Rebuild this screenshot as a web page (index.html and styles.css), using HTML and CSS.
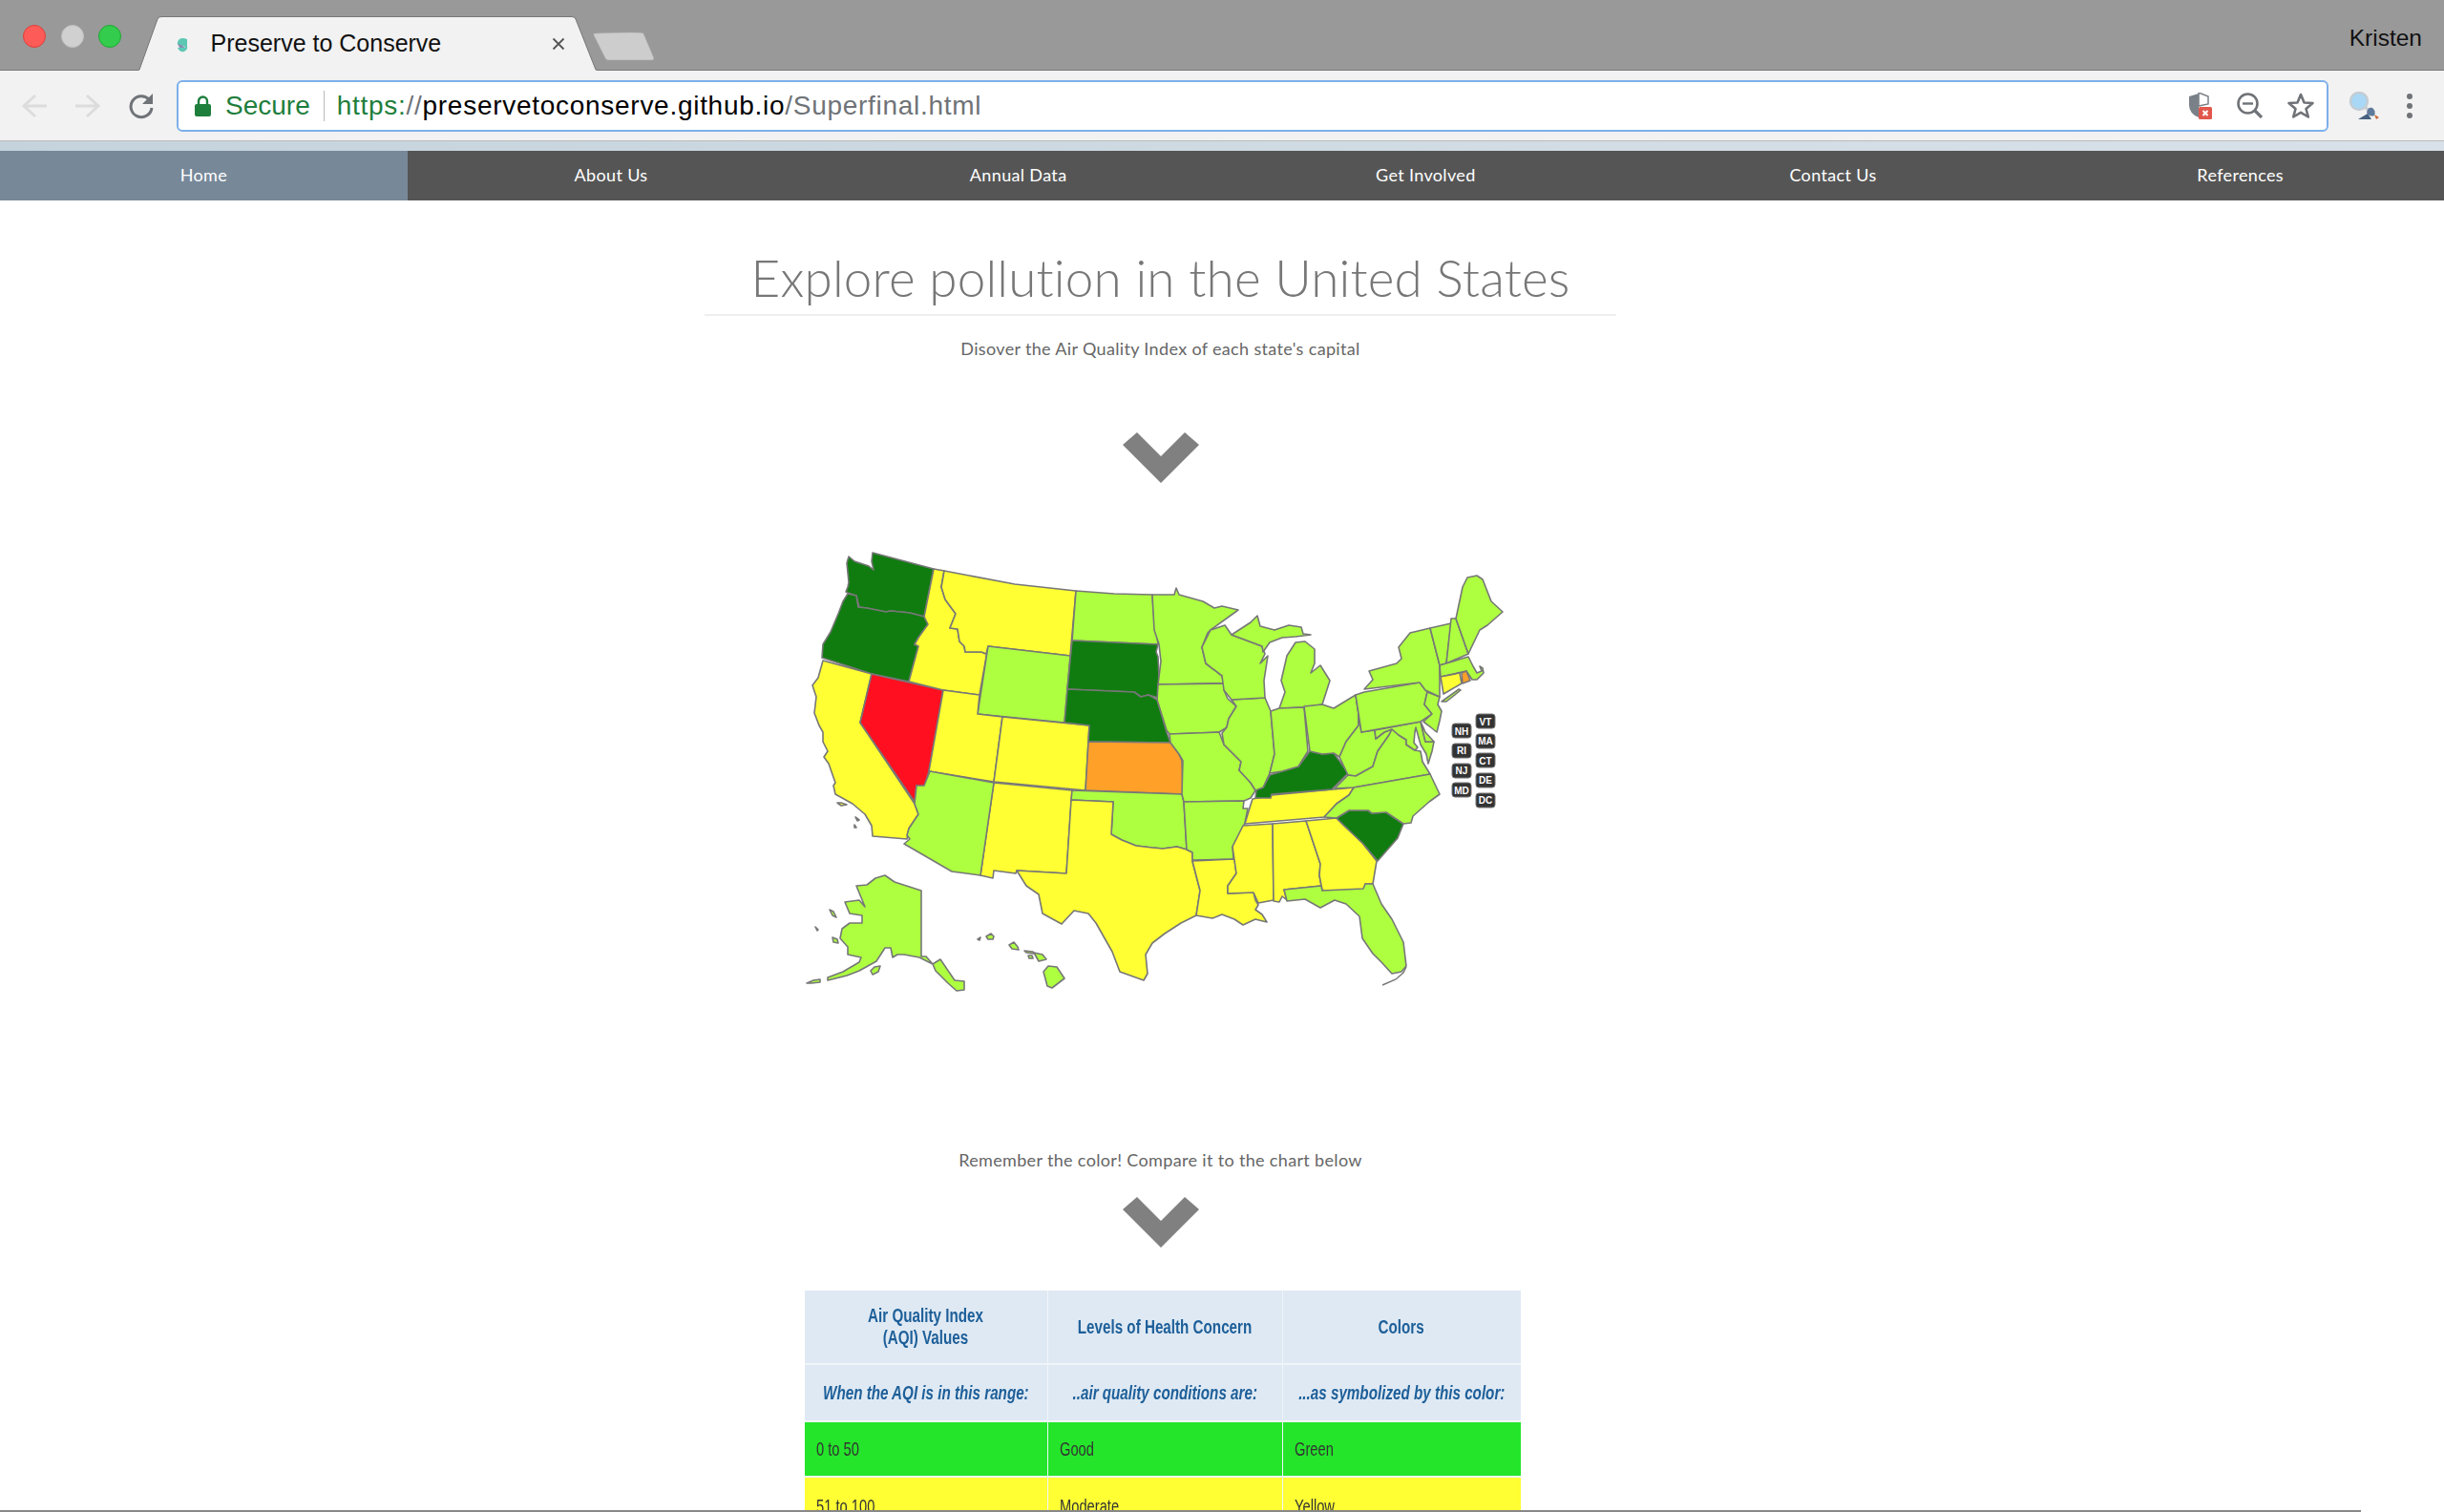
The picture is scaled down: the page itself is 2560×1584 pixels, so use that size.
FILE: index.html
```html
<!DOCTYPE html>
<html lang="en">
<head>
<meta charset="utf-8">
<title>Preserve to Conserve</title>
<link rel="stylesheet" href="styles.css">
</head>
<body>
<header class="tabstrip">
  <div class="lights"><span class="light red"></span><span class="light grey"></span><span class="light green"></span></div>
  <div class="tab">
    <svg class="tab-shape" width="483" height="57" viewBox="0 0 483 57"><path d="M0 57 L2 56 L21 3 Q22 .5 25 .5 H455 Q458 .5 459 3 L480 56 L483 57" fill="#f2f2f2" stroke="#777" stroke-width="1"/></svg>
    <svg class="favicon" width="12" height="16" viewBox="0 0 12 16"><path d="M11 2 Q3 -1 1 5 Q0 9 5 9 Q9 9 9 11 L1 11 Q3 16 8 15 Q12 13 11 10" fill="#5cc8b4"/><path d="M1 5 Q1 8 5 8 L9 11 L3 11 Q1 8 1 5Z" fill="#8a8fb0"/></svg>
    <span class="tab-title">Preserve to Conserve</span>
    <svg class="tab-close" width="14" height="14" viewBox="0 0 14 14"><path d="M1.500 1.500 L12.500 12.500 M12.500 1.500 L1.500 12.500" stroke="#555" stroke-width="1.800"/></svg>
  </div>
  <svg class="newtab" width="64" height="31" viewBox="0 0 64 31"><path d="M2 2 Q52 0 53 2 L64 28 Q64 30 62 30 H16 Q14 30 13 28 L1 4 Q0 2 2 2Z" fill="#cdcdcd" stroke="#aaa" stroke-width=".6"/></svg>
  <span class="user">Kristen</span>
</header>

<div class="toolbar">
  <svg class="tool" width="28" height="26" viewBox="0 0 28 26"><path d="M15 2 L3 13 L15 24 M3 13 H27" fill="none" stroke="#dcdcdc" stroke-width="3"/></svg>
  <svg class="tool" width="28" height="26" viewBox="0 0 28 26"><path d="M13 2 L25 13 L13 24 M25 13 H1" fill="none" stroke="#dcdcdc" stroke-width="3"/></svg>
  <svg class="tool" width="28" height="28" viewBox="0 0 28 28"><path d="M22 7 A11 11 0 1 0 25 16" fill="none" stroke="#6f7377" stroke-width="3"/><path d="M26 1 V12 H15Z" fill="#6f7377"/></svg>
  <div class="address">
    <svg class="lock" width="17" height="22" viewBox="0 0 17 22"><path d="M4 9 V6 A4.500 4.500 0 0 1 13 6 V9" fill="none" stroke="#1e7e3c" stroke-width="2.400"/><rect x="0" y="9" width="17" height="13" rx="2" fill="#1e7e3c"/></svg>
    <span class="secure">Secure</span>
    <span class="sep"></span>
    <span class="url"><span class="secure">https:</span><span class="dim">//</span>preservetoconserve.github.io<span class="dim">/Superfinal.html</span></span>
    <div class="addr-icons">
      <svg width="26" height="28" viewBox="0 0 26 28"><path d="M12 0 L22 4 V12 L12 14Z" fill="#fff" stroke="#7a8087" stroke-width="1.500"/><path d="M2 4 L12 1 V26 Q2 22 2 13Z" fill="#7a8087"/><rect x="12" y="15" width="14" height="13" rx="1.500" fill="#e2574c"/><path d="M16.500 19 L21.500 24 M21.500 19 L16.500 24" stroke="#fff" stroke-width="2"/></svg>
      <svg width="27" height="27" viewBox="0 0 27 27"><circle cx="11.500" cy="11.500" r="10" fill="none" stroke="#6f7377" stroke-width="2.600"/><path d="M18.500 18.500 L26 26" stroke="#6f7377" stroke-width="3.200"/><path d="M6 11.500 H17" stroke="#6f7377" stroke-width="2.400"/></svg>
      <svg width="28" height="27" viewBox="0 0 28 27"><path d="M14 2 L17.500 10.500 L26.500 11 L19.500 17 L21.800 25.500 L14 20.800 L6.200 25.500 L8.500 17 L1.500 11 L10.500 10.500Z" fill="none" stroke="#6f7377" stroke-width="2.600" stroke-linejoin="round"/></svg>
    </div>
  </div>
  <svg class="ext" width="32" height="29" viewBox="0 0 32 29"><circle cx="11" cy="10" r="9" fill="#a8d8f5" stroke="#c4ccd2" stroke-width="2.400"/><path d="M17 16 L23 21" stroke="#c8ccd0" stroke-width="3"/><path d="M19 22 Q20 16 25 17 Q29 20 27 25 Q22 27 19 22Z" fill="#5f7a9a"/><path d="M10 29 L20 23 L24 29Z" fill="#46617f"/><path d="M27 24 L32 27 L29 29Z" fill="#c8673a"/></svg>
  <svg class="dots" width="10" height="26" viewBox="0 0 10 26"><circle cx="5" cy="3" r="3" fill="#6f7377"/><circle cx="5" cy="13" r="3" fill="#6f7377"/><circle cx="5" cy="23" r="3" fill="#6f7377"/></svg>
</div>
<div class="strip"></div>

<nav class="nav">
  <a class="nav-item active">Home</a>
  <a class="nav-item">About Us</a>
  <a class="nav-item">Annual Data</a>
  <a class="nav-item">Get Involved</a>
  <a class="nav-item">Contact Us</a>
  <a class="nav-item">References</a>
</nav>

<main class="content">
  <h1 class="title">Explore pollution in the United States</h1>
  <p class="lead first">Disover the Air Quality Index of each state's capital</p>
  <svg class="chevron one" width="80" height="54" viewBox="0 0 80 54"><path d="M0 13 L15 0 L40 25 L65 0 L80 13 L40 53Z" fill="#808080"/></svg>

  <svg class="map" width="751" height="480" viewBox="840 570 751 480">
    <g class="states">
      <polygon class="d" points="914,579 978,596 968,646 953,642 933,640 928,641 918,639 908,637 900,636 898,628 897,624 888,621 886,620 888,615 889,610 888,600 887,590 889,583 895,588 910,593 915,597 913,588"/>
      <polygon class="d" points="888,622 897,624 899,636 908,637 918,639 928,641 933,640 953,642 968,646 972,654 962,668 958,675 962,677 952,714 913,706 861,689 862,675 870,662 878,643 883,630"/>
      <polygon class="y" points="862,692 913,706 901,757 958,842 962,853 952,868 950,879 914,876 913,865 906,853 893,842 875,832 873,823 875,820 868,800 863,793 867,787 862,777 862,767 858,760 853,747 855,730 851,718 857,710"/>
      <polygon class="r" points="913,706 988,723 973,808 968,825 960,823 958,840 901,757"/>
      <polygon class="y" points="978,596 989,598 986,615 990,628 1001,643 995,658 1003,659 1005,672 1010,677 1011,683 1028,683 1033,685 1035,677 1026,728 988,723 952,714 962,677 958,675 962,668 972,654 968,646"/>
      <polygon class="y" points="989,598 1063,612 1127,619 1121,687 1035,677 1033,685 1028,683 1011,683 1010,677 1005,672 1003,659 995,658 1001,643 990,628 986,615"/>
      <polygon class="g" points="1035,677 1121,687 1115,757 1024,748"/>
      <polygon class="y" points="988,723 1026,728 1024,748 1050,751 1041,819 973,808"/>
      <polygon class="y" points="1050,751 1141,760 1140,777 1137,828 1041,819"/>
      <polygon class="g" points="1127,619 1167,622 1207,623 1208,640 1213,675 1123,671"/>
      <polygon class="d" points="1123,671 1213,675 1211,683 1213,688 1215,732 1210,730 1203,728 1195,730 1188,725 1118,722"/>
      <polygon class="d" points="1118,722 1188,725 1195,730 1203,728 1212,733 1222,767 1226,778 1140,777 1141,760 1115,757"/>
      <polygon class="o" points="1140,777 1226,778 1235,790 1238,797 1239,832 1137,828"/>
      <polygon class="y" points="1041,820 1123,828 1117,915 1065,912 1064,915 1041,912 1040,920 1027,917"/>
      <polygon class="g" points="974,808 1041,820 1027,917 997,913 947,884 953,879 950,875 952,868 962,853 958,842 960,823 968,823"/>
      <polygon class="g" points="1123,828 1238,832 1240,840 1243,890 1233,887 1218,889 1207,888 1190,886 1175,880 1164,874 1166,840 1122,838"/>
      <polygon class="y" points="1122,838 1166,840 1164,874 1175,880 1190,886 1207,888 1218,889 1233,887 1243,890 1249,893 1249,902 1257,933 1253,959 1237,967 1220,978 1207,988 1200,1000 1202,1020 1198,1027 1173,1018 1165,997 1148,967 1140,957 1125,954 1112,968 1092,957 1088,937 1075,928 1065,912 1117,915"/>
      <polygon class="g" points="1207,623 1230,623 1232,616 1235,623 1260,630 1272,637 1280,635 1297,639 1268,660 1265,663 1259,678 1263,695 1280,708 1282,716 1213,717 1216,693 1214,675 1209,660"/>
      <polygon class="g" points="1213,717 1282,716 1282,723 1286,732 1295,740 1287,753 1285,762 1277,767 1225,769 1222,765 1212,733"/>
      <polygon class="g" points="1225,769 1277,767 1282,780 1300,798 1298,807 1310,820 1315,828 1310,836 1303,839 1240,840 1238,832 1239,797 1235,790 1226,778"/>
      <polygon class="g" points="1240,840 1303,839 1302,847 1307,847 1304,862 1300,870 1291,887 1292,900 1249,901 1249,893 1243,890"/>
      <polygon class="y" points="1249,902 1293,900 1295,915 1286,928 1286,936 1313,935 1315,943 1318,948 1315,953 1322,958 1327,966 1315,963 1302,969 1293,963 1280,958 1270,962 1253,959 1257,933"/>
      <polygon class="y" points="1302,865 1333,863 1334,943 1318,946 1313,935 1286,936 1286,928 1295,915 1291,887"/>
      <polygon class="y" points="1333,863 1368,860 1383,905 1382,917 1384,928 1345,932 1348,943 1343,939 1340,945 1334,944"/>
      <polygon class="y" points="1368,860 1400,857 1408,865 1427,883 1442,902 1438,926 1430,926 1430,934 1385,933 1382,917 1383,905"/>
      <polygon class="d" points="1400,857 1413,849 1433,849 1437,852 1452,851 1470,863 1464,878 1443,902 1427,883 1408,865"/>
      <polygon class="g" points="1345,932 1384,928 1385,933 1428,931 1430,926 1438,926 1447,947 1458,963 1470,987 1473,1012 1468,1018 1458,1020 1447,1008 1438,999 1427,983 1424,960 1410,947 1398,943 1383,951 1367,942 1348,944"/>
      <polygon class="y" points="1312,837 1332,833 1418,825 1413,833 1400,842 1387,856 1304,863 1310,843"/>
      <polygon class="d" points="1315,836 1316,827 1323,825 1330,812 1343,808 1360,803 1372,787 1385,790 1397,789 1403,797 1412,810 1395,827 1332,832 1331,836"/>
      <polygon class="g" points="1290,733 1325,731 1331,745 1335,790 1330,810 1323,825 1315,828 1310,820 1298,807 1300,798 1282,780 1280,768 1285,762 1287,753 1295,740"/>
      <polygon class="g" points="1268,660 1283,655 1290,665 1322,677 1325,685 1320,695 1328,687 1324,713 1325,731 1290,733 1282,723 1280,708 1263,695 1259,678"/>
      <polygon class="g" points="1290,665 1310,652 1317,645 1320,656 1335,660 1350,655 1363,657 1365,664 1373,665 1357,667 1343,668 1330,673 1323,683 1322,677"/>
      <polygon class="g" points="1340,742 1346,725 1342,713 1348,687 1357,673 1367,672 1377,680 1377,695 1373,705 1383,697 1393,713 1385,738 1366,741"/>
      <polygon class="g" points="1331,745 1340,742 1366,741 1370,787 1360,803 1343,808 1330,810 1335,790"/>
      <polygon class="g" points="1366,740 1385,738 1397,742 1420,728 1423,748 1423,760 1410,777 1403,793 1397,789 1385,790 1372,787"/>
      <polygon class="g" points="1420,728 1423,748 1423,760 1410,777 1403,793 1412,812 1420,813 1438,803 1443,787 1455,770 1458,764 1450,767 1441,774 1440,765 1426,767"/>
      <polygon class="g" points="1398,826 1412,812 1420,813 1438,803 1443,787 1455,770 1458,764 1465,770 1473,775 1473,780 1482,786 1488,787 1490,798 1498,811 1418,825"/>
      <polygon class="g" points="1418,825 1498,811 1508,832 1497,840 1480,855 1478,862 1470,863 1452,851 1437,852 1433,849 1413,849 1400,857 1387,856 1400,842 1413,833"/>
      <polygon class="g" points="1440,765 1488,756 1493,777 1502,777 1500,787 1496,800 1494,790 1488,780 1483,762 1482,767 1481,778 1485,783 1482,786 1473,780 1473,775 1465,770 1458,764 1450,767 1441,774"/>
      <polygon class="g" points="1488,756 1493,767 1502,777 1493,777"/>
      <polygon class="g" points="1420,728 1429,725 1487,715 1495,725 1492,738 1500,748 1488,756 1426,767"/>
      <polygon class="g" points="1495,725 1508,730 1506,738 1510,745 1508,755 1505,767 1500,763 1491,756 1500,748 1492,738"/>
      <polygon class="g" points="1429,722 1438,712 1434,703 1463,695 1468,690 1465,678 1477,663 1498,658 1508,697 1508,730 1493,723 1487,715"/>
      <polygon class="g" points="1510,735 1528,722 1530,723 1515,735"/>
      <polygon class="g" points="1498,658 1520,653 1515,695 1508,697"/>
      <polygon class="g" points="1520,648 1525,648 1538,685 1515,695"/>
      <polygon class="g" points="1525,648 1532,615 1537,605 1547,603 1553,607 1562,630 1574,641 1558,655 1550,660 1538,685"/>
      <polygon class="g" points="1508,697 1538,688 1543,698 1547,705 1552,703 1550,698 1553,700 1554,705 1547,712 1542,712 1536,703 1509,709"/>
      <polygon class="y" points="1509,709 1529,705 1531,716 1512,727"/>
      <polygon class="o" points="1531,705 1536,703 1540,713 1532,716"/>
      <polygon class="g" points="927,917 937,924 965,933 965,1002 970,1002 977,1010 985,1005 1000,1027 1010,1028 1010,1037 1002,1038 993,1030 980,1017 977,1010 963,1003 947,1000 940,1000 935,1003 933,993 927,993 918,1007 900,1017 887,1022 867,1027 867,1024 883,1018 900,1008 902,1003 888,1000 888,992 880,983 882,973 890,967 903,967 903,959 890,957 885,945 900,943 906,950 897,928 908,927 917,920"/>
      <polygon class="g" points="845,1030 852,1027 859,1026 859,1029 850,1030"/>
      <polygon class="g" points="912,1017 916,1013 922,1012 920,1018 914,1021"/>
      <polygon class="g" points="869,953 873,955 876,961 872,959"/>
      <polygon class="g" points="872,982 877,984 878,988 873,987"/>
      <polygon class="g" points="854,971 857,974 856,975"/>
      <polygon class="g" points="1033,981 1038,978 1041,981 1040,984 1035,984"/>
      <polygon class="g" points="1024,984 1027,982 1026,985"/>
      <polygon class="g" points="1057,990 1062,987 1066,992 1067,995 1060,994"/>
      <polygon class="g" points="1073,996 1082,997 1083,999 1075,998"/>
      <polygon class="g" points="1083,998 1092,1000 1096,1005 1088,1007"/>
      <polygon class="g" points="1077,1001 1081,1001 1082,1004 1078,1004"/>
      <polygon class="g" points="1093,1018 1098,1012 1107,1013 1115,1025 1102,1035 1097,1033"/>
      <polygon class="y" points="877,841 881,841 887,843 881,844"/>
      <polygon class="y" points="896,856 900,859 898,860"/>
      <polygon class="y" points="895,864 897,867 895,867"/>
      <polyline class="keys" points="1448,1032 1462,1026 1470,1019 1473,1013"/>
    </g>
    <g class="label"><rect x="1546" y="748" width="20" height="15" rx="3"/><text x="1556" y="759.500">VT</text></g>
    <g class="label"><rect x="1546" y="769" width="20" height="15" rx="3"/><text x="1556" y="780">MA</text></g>
    <g class="label"><rect x="1546" y="789" width="20" height="15" rx="3"/><text x="1556" y="800.500">CT</text></g>
    <g class="label"><rect x="1546" y="810" width="20" height="15" rx="3"/><text x="1556" y="821">DE</text></g>
    <g class="label"><rect x="1546" y="831" width="20" height="15" rx="3"/><text x="1556" y="841.500">DC</text></g>
    <g class="label"><rect x="1521" y="758" width="20" height="15" rx="3"/><text x="1531" y="769.500">NH</text></g>
    <g class="label"><rect x="1521" y="779" width="20" height="15" rx="3"/><text x="1531" y="790">RI</text></g>
    <g class="label"><rect x="1521" y="800" width="20" height="15" rx="3"/><text x="1531" y="810.500">NJ</text></g>
    <g class="label"><rect x="1521" y="820" width="20" height="15" rx="3"/><text x="1531" y="831.500">MD</text></g>
  </svg>

  <p class="lead second">Remember the color! Compare it to the chart below</p>
  <svg class="chevron two" width="80" height="54" viewBox="0 0 80 54"><path d="M0 13 L15 0 L40 25 L65 0 L80 13 L40 53Z" fill="#808080"/></svg>

  <div class="aqi">
    <div class="cell head center"><span class="squeeze">Air Quality Index<br>(AQI) Values</span></div>
    <div class="cell head center"><span class="squeeze">Levels of Health Concern</span></div>
    <div class="cell head center"><span class="squeeze">Colors</span></div>
    <div class="cell head center em"><span class="squeeze">When the AQI is in this range:</span></div>
    <div class="cell head center em"><span class="squeeze">..air quality conditions are:</span></div>
    <div class="cell head center em"><span class="squeeze">...as symbolized by this color:</span></div>
    <div class="cell good"><span class="squeeze">0 to 50</span></div>
    <div class="cell good"><span class="squeeze">Good</span></div>
    <div class="cell good"><span class="squeeze">Green</span></div>
    <div class="cell moderate"><span class="squeeze">51 to 100</span></div>
    <div class="cell moderate"><span class="squeeze">Moderate</span></div>
    <div class="cell moderate"><span class="squeeze">Yellow</span></div>
  </div>
</main>
<div class="window-edge"></div>
</body>
</html>
```
FILE: styles.css
```css
html, body { margin: 0; padding: 0; }
body { height: 1584px; overflow: hidden; background: #fff; font-family: "Liberation Sans", Arial, sans-serif; position: relative; }

.tabstrip { display: flex; align-items: flex-start; height: 73px; background: #999; border-bottom: 1px solid #777; }
.lights { display: flex; gap: 15.5px; padding: 26px 0 0 24px; }
.light { width: 24px; height: 24px; border-radius: 50%; box-sizing: border-box; }
.light.red { background: #fc5b57; border: 1px solid #df3f3b; }
.light.grey { background: #d0d0d0; border: 1px solid #c0c0c0; }
.light.green { background: #33cc4c; border: 1px solid #20a835; }

.tab { position: relative; display: flex; align-items: center; width: 483px; height: 57px; margin: 17px 0 0 17px; box-sizing: border-box; padding: 0 35px 0 41px; }
.tab-shape { position: absolute; left: 0; top: 0; }
.favicon, .tab-title, .tab-close { position: relative; }
.favicon { margin-top: 2px; }
.tab-title { flex: 1; margin-left: 23.5px; font-size: 25px; color: #111; }
.newtab { margin: 33px 0 0 -6px; }
.user { margin: 26px 23px 0 auto; font-size: 24.5px; line-height: 28px; color: #111; }

.toolbar { display: flex; align-items: center; height: 73px; background: #f2f2f2; border-bottom: 1px solid #bbb; padding-left: 22px; }
.tool { flex: none; margin-right: 28px; }
.tool:nth-child(3) { margin-right: 23px; }
.address { flex: 1; display: flex; align-items: center; height: 54px; box-sizing: border-box; padding: 0 13px 0 17px; background: #fff; border: 2px solid #7db0ea; border-radius: 6px; font-size: 28px; white-space: nowrap; }
.lock { flex: none; }
.secure { color: #1e7e3c; }
.lock + .secure { margin-left: 15px; }
.sep { width: 1px; height: 32px; margin: 0 13px 0 14px; background: #bbb; }
.url { color: #000; letter-spacing: .72px; }
.dim { color: #6f7377; }
.addr-icons { margin-left: auto; display: flex; align-items: center; gap: 26px; }
.ext { flex: none; margin-left: 21px; }
.dots { flex: none; margin: 0 31px 0 27px; }

.strip { height: 10px; background: linear-gradient(90deg, #c5d3dc, #d8e1e9); }

.nav { display: grid; grid-template-columns: repeat(6, 1fr); height: 52px; background: #555; }
.nav-item { display: flex; align-items: center; justify-content: center; padding-bottom: 2px; box-sizing: border-box; font-family: Lato, sans-serif; font-size: 18px; letter-spacing: .35px; color: #fff; }
.nav-item.active { background: #778899; }

.content { display: flex; flex-direction: column; align-items: center; width: 2431px; }
.title { box-sizing: border-box; width: 955px; height: 121px; margin: 0; padding-top: 51px; border-bottom: 2px solid #eee; text-align: center; font-family: Lato, sans-serif; font-weight: 300; font-size: 53px; line-height: 60px; letter-spacing: .17px; color: #777; }
.lead { margin: 0; font-family: Lato, sans-serif; font-size: 18px; line-height: 24px; letter-spacing: .34px; color: #666; }
.lead.first { margin-top: 22px; }
.chevron { display: block; flex: none; }
.chevron.one { margin-top: 76px; }
.map { display: block; flex: none; margin-top: 63px; }
.lead.second { margin-top: 153px; }
.chevron.two { margin-top: 27px; }

.states polygon { stroke: #777; stroke-width: 1.6; stroke-linejoin: round; }
.g { fill: #adff40; }
.y { fill: #ffff33; }
.d { fill: #107c10; }
.r { fill: #ff0f20; }
.o { fill: #ffa028; }
.keys { fill: none; stroke: #777; stroke-width: 1.4; }
.label rect { fill: #333; stroke: #777; stroke-width: 1; }
.label text { fill: #fff; font-family: "Liberation Sans", Arial, sans-serif; font-size: 10px; font-weight: 700; text-anchor: middle; }

.aqi { display: grid; grid-template-columns: 254px 245px 249px; grid-template-rows: 76px 58px 56px 60px; gap: 2px 1px; flex: none; margin: 44px 0 0 4px; background: #f0f5f9; font-family: "Liberation Sans", sans-serif; filter: blur(.4px); }
.cell { display: flex; align-items: center; padding-left: 12px; font-size: 21px; color: #333; white-space: nowrap; }
.squeeze { display: inline-block; transform: scaleX(.7); transform-origin: left center; }
.head { background: #dfe9f3; color: #1d5f99; font-size: 20px; font-weight: 700; }
.center { justify-content: center; padding: 0; text-align: center; line-height: 23px; }
.center .squeeze { transform: scaleX(.76); transform-origin: center; }
.em { font-style: italic; }
.good { background: #24e52a; }
.moderate { background: #ffff33; }

.window-edge { position: absolute; left: 0; bottom: 0; width: 2473px; height: 2px; background: #888; }
```
